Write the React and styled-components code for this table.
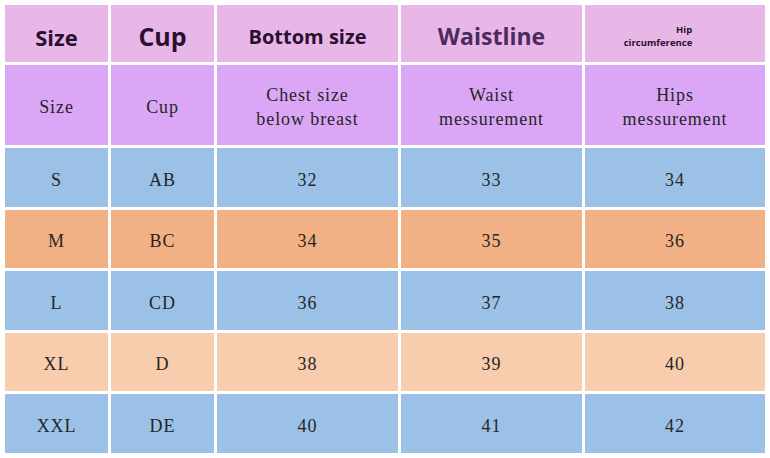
import React from "react";
import styled, { createGlobalStyle } from "styled-components";

const Global = createGlobalStyle`
  html, body {
    margin: 0;
    background: #fff;
  }
`;

const colors = {
  head: "#e9b6e8",
  sub: "#dba6f6",
  blue: "#9bc1e6",
  orange: "#f2b085",
  peach: "#f7cdae",
};

const Page = styled.div`
  padding: 5px;
  width: 770px;
  height: 458px;
  box-sizing: border-box;
`;

const Table = styled.div`
  display: grid;
  grid-template-columns: 103px 103px 181px 181px 180px;
  grid-template-rows: 57px 80px 59px 58px 59px 58px 59px;
  gap: 3px;
`;

const Cell = styled.div`
  display: flex;
  align-items: center;
  justify-content: center;
  text-align: center;
  padding-top: 4px;
  box-sizing: border-box;
  background: ${(p) => colors[p.$bg]};
  color: #262626;
  font-family: "Liberation Serif", "DejaVu Serif", serif;
  font-size: 18px;
  letter-spacing: 0.9px;
  line-height: 24px;
`;

const HeadCell = styled(Cell)`
  padding-top: 7px;
  font-family: "Open Sans", "Noto Sans", sans-serif;
  font-weight: 700;
  letter-spacing: 0;
  color: ${(p) => p.$color || "#2a1030"};
  font-size: ${(p) => p.$size}px;
  line-height: 1.1;
`;

const SmallStack = styled.div`
  display: flex;
  flex-direction: column;
  align-items: flex-end;
  font-size: 9.5px;
  line-height: 13px;
  margin-left: -34px;
  margin-top: -3px;
`;

const headers = [
  { text: "Size", size: 22 },
  { text: "Cup", size: 25 },
  { text: "Bottom size", size: 20 },
  { text: "Waistline", size: 23, color: "#4a2b5c" },
];

const subs = [
  ["Size"],
  ["Cup"],
  ["Chest size", "below breast"],
  ["Waist", "messurement"],
  ["Hips", "messurement"],
];

const rows = [
  { bg: "blue", cells: ["S", "AB", "32", "33", "34"] },
  { bg: "orange", cells: ["M", "BC", "34", "35", "36"] },
  { bg: "blue", cells: ["L", "CD", "36", "37", "38"] },
  { bg: "peach", cells: ["XL", "D", "38", "39", "40"] },
  { bg: "blue", cells: ["XXL", "DE", "40", "41", "42"] },
];

export default function App() {
  return (
    <Page>
      <Global />
      <Table>
        {headers.map((h) => (
          <HeadCell key={h.text} $bg="head" $size={h.size} $color={h.color}>
            {h.text}
          </HeadCell>
        ))}
        <HeadCell $bg="head" $size={10}>
          <SmallStack>
            <span>Hip</span>
            <span>circumference</span>
          </SmallStack>
        </HeadCell>

        {subs.map((lines, i) => (
          <Cell key={i} $bg="sub">
            <div>
              {lines.map((l) => (
                <div key={l}>{l}</div>
              ))}
            </div>
          </Cell>
        ))}

        {rows.map((r) =>
          r.cells.map((c, i) => (
            <Cell key={r.cells[0] + i} $bg={r.bg}>
              {c}
            </Cell>
          ))
        )}
      </Table>
    </Page>
  );
}
